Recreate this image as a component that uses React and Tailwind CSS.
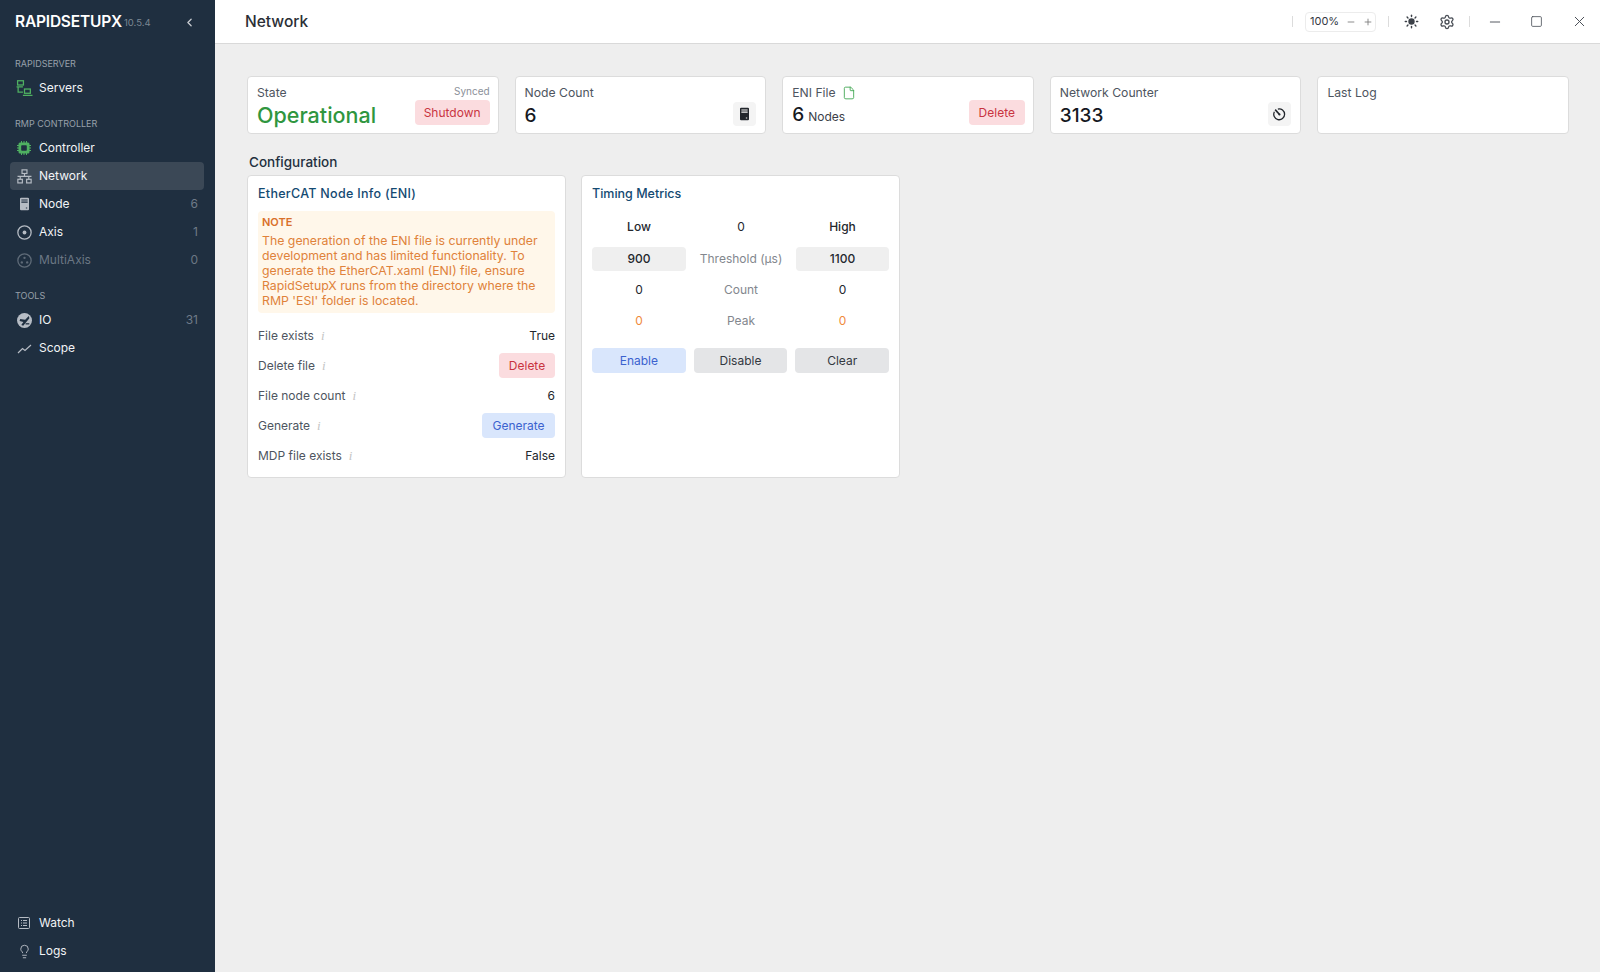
import { ChevronLeft, Minus, Plus, Sun, Settings, X, Square, File, Lightbulb } from 'lucide-react'

const FONT = "font-['Inter','Noto_Sans',sans-serif]"

function ServersIcon() {
  return (
    <svg width="17" height="17" viewBox="0 0 16 16" fill="none" stroke="currentColor" strokeWidth="1.2">
      <rect x="1.500" y="0.700" width="5.500" height="4" />
      <rect x="8" y="8.500" width="5.500" height="4" />
      <path d="M0.500 6.500h6M2 6.500v5h4.500M6.500 14.500h9" />
    </svg>
  )
}

function ChipIcon() {
  return (
    <svg width="14" height="14" viewBox="0 0 14 14" fill="currentColor">
      <path d="M3 1.500h8a1.500 1.500 0 0 1 1.500 1.500v8a1.500 1.500 0 0 1-1.500 1.500H3A1.500 1.500 0 0 1 1.500 11V3A1.500 1.500 0 0 1 3 1.500z" />
      <path d="M4 0h1v14H4zM6.500 0h1v14h-1zM9 0h1v14H9zM0 4h14v1H0zM0 6.500h14v1H0zM0 9h14v1H0z" />
      <rect x="4.200" y="4.200" width="5.600" height="5.600" rx="0.800" fill="#1f2f40" />
    </svg>
  )
}

function NetworkIcon() {
  return (
    <svg width="15" height="15" viewBox="0 0 14 14" fill="none" stroke="currentColor" strokeWidth="1.100">
      <rect x="4.700" y="0.800" width="4.600" height="3.400" />
      <rect x="0.800" y="9.600" width="4.200" height="3.400" />
      <rect x="9" y="9.600" width="4.200" height="3.400" />
      <path d="M7 4.200v2.600M0.500 6.800h13M3 6.800v2.800M11 6.800v2.800" />
    </svg>
  )
}

function NodeIcon({ className = '' }) {
  return (
    <svg width="9" height="14" viewBox="0 0 10 14" className={className}>
      <path fill="currentColor" fillRule="evenodd" d="M1.200 0h7.600A1.200 1.200 0 0 1 10 1.200v11.600A1.200 1.200 0 0 1 8.800 14H1.200A1.200 1.200 0 0 1 0 12.800V1.200A1.200 1.200 0 0 1 1.200 0zM1.500 2v1.200h7V2zm0 2.300v1.200h7V4.300zM6.500 11v1h1.500v-1z" />
    </svg>
  )
}

function AxisIcon() {
  return (
    <svg width="15" height="15" viewBox="0 0 14 14" fill="none">
      <circle cx="7" cy="7" r="6.200" stroke="currentColor" strokeWidth="1.200" />
      <circle cx="7" cy="7" r="1.800" fill="currentColor" />
    </svg>
  )
}

function MultiAxisIcon() {
  return (
    <svg width="15" height="15" viewBox="0 0 14 14" fill="none">
      <circle cx="7" cy="7" r="6.200" stroke="currentColor" strokeWidth="1.200" />
      <circle cx="7" cy="4.500" r="1.100" fill="currentColor" />
      <circle cx="4.500" cy="8.800" r="1.100" fill="currentColor" />
      <circle cx="9.500" cy="8.800" r="1.100" fill="currentColor" />
    </svg>
  )
}

function IoIcon() {
  return (
    <svg width="15" height="15" viewBox="0 0 14 14">
      <circle cx="7" cy="7" r="7" fill="currentColor" />
      <path d="M11 2.800 7.600 6.400 3 5.600 2.400 7.400 6 8.400 4 11.200 5.800 12 11.600 5z" fill="#1f2f40" />
      <path d="M8 9.500h3.500v1.200H8z" fill="#1f2f40" />
    </svg>
  )
}

function ScopeIcon() {
  return (
    <svg width="15" height="15" viewBox="0 0 15 15" fill="none" stroke="currentColor" strokeWidth="1.200">
      <path d="M1 12 5.500 7.500 8 9.500 14 4" />
    </svg>
  )
}

function WatchIcon() {
  return (
    <svg width="12" height="12" viewBox="0 0 12 12" fill="none" stroke="currentColor" strokeWidth="1">
      <rect x="0.500" y="0.500" width="11" height="11" rx="1" />
      <path d="M3 3.500h1M5 3.500h4M3 6h1M5 6h4M3 8.500h1M5 8.500h4" />
    </svg>
  )
}

function CounterIcon() {
  return (
    <svg width="13" height="13" viewBox="0 0 12 12" fill="none" stroke="currentColor" strokeWidth="1.200">
      <path d="M4.500 1a5 5 0 1 1-3.200 2.500" />
      <path d="M2 1.500 6 6" strokeWidth="1.500" />
      <circle cx="6" cy="6" r="1" fill="currentColor" stroke="none" />
    </svg>
  )
}

function NavItem({ icon, label, count, iconColor = 'text-[#b6bcc4]', active, muted }) {
  return (
    <div className={`flex h-7 items-center rounded pl-[5px] pr-[6px] ${active ? 'bg-[#3b4856]' : ''}`}>
      <span className={`flex w-[18px] justify-center ${iconColor}`}>{icon}</span>
      <span className={`ml-[6px] flex-1 text-[12px] ${muted ? 'text-[#6b7784]' : 'text-[#f2f4f6]'}`}>{label}</span>
      {count !== undefined && <span className={`text-xs ${muted ? 'text-[#6b7784]' : 'text-[#6f7b88]'}`}>{count}</span>}
    </div>
  )
}

function SectionLabel({ children }) {
  return <div className="mb-[4px] pl-[5px] text-[9px] leading-[12px] text-[#97a0aa]">{children}</div>
}

function Sidebar() {
  return (
    <aside className="flex w-[215px] shrink-0 flex-col bg-[#1f2f40] pl-[10px] pr-[11px]">
      <div className="flex h-[43px] items-center pt-[1px] pl-[5px] pr-[1px]">
        <span className="text-[15.500px] font-semibold tracking-[-0.2px] text-white">RAPIDSETUPX</span>
        <span className="ml-[2px] mt-[2px] text-[9.500px] text-[#7c8793]">10.5.4</span>
        <ChevronLeft size={13} strokeWidth={2.400} className="ml-auto mr-[7px] text-[#c8ccd1]" />
      </div>
      <div className="mt-[15px]"><SectionLabel>RAPIDSERVER</SectionLabel></div>
      <NavItem icon={<ServersIcon />} iconColor="text-[#4fb061]" label="Servers" />
      <div className="mt-[16px]"><SectionLabel>RMP CONTROLLER</SectionLabel></div>
      <NavItem icon={<ChipIcon />} iconColor="text-[#4fb061]" label="Controller" />
      <NavItem icon={<NetworkIcon />} label="Network" active />
      <NavItem icon={<NodeIcon />} label="Node" count="6" />
      <NavItem icon={<AxisIcon />} label="Axis" count="1" />
      <NavItem icon={<MultiAxisIcon />} iconColor="text-[#5f6b78]" label="MultiAxis" count="0" muted />
      <div className="mt-[16px]"><SectionLabel>TOOLS</SectionLabel></div>
      <NavItem icon={<IoIcon />} label="IO" count="31" />
      <NavItem icon={<ScopeIcon />} label="Scope" />
      <div className="mt-auto mb-[7px]">
        <NavItem icon={<WatchIcon />} label="Watch" />
        <NavItem icon={<Lightbulb size={15} strokeWidth={1.500} />} label="Logs" />
      </div>
    </aside>
  )
}

function TitleBar() {
  return (
    <header className="flex h-[44px] shrink-0 items-center border-b border-[#d9d9d9] bg-white pl-[30px]">
      <h1 className="pt-[1px] text-[15.500px] font-medium text-[#2b2f36]">Network</h1>
      <div className="ml-auto flex items-center text-[#4a4f57]">
        <span className="h-[11px] w-px bg-[#dcdcdc]" />
        <div className="ml-[12px] flex h-[20px] w-[71px] items-center rounded-sm border border-[#ececec] pl-[4px] text-[11px] text-[#33383f]">
          100%
          <Minus size={10} strokeWidth={2} className="ml-[7px] text-[#777]" />
          <Plus size={10} strokeWidth={2} className="ml-[7px] text-[#777]" />
        </div>
        <span className="ml-[12px] h-[11px] w-px bg-[#dcdcdc]" />
        <Sun size={15} strokeWidth={2.200} className="ml-[15px] fill-[#3c4148] text-[#3c4148]" />
        <Settings size={16} strokeWidth={2} className="ml-[20px]" />
        <span className="ml-[14px] h-[11px] w-px bg-[#dcdcdc]" />
        <Minus size={16} strokeWidth={1.400} className="ml-[17px]" />
        <Square size={13} strokeWidth={1.500} className="ml-[27px]" />
        <X size={17} strokeWidth={1.400} className="ml-[28px] mr-[12px]" />
      </div>
    </header>
  )
}

function StatCard({ label, children }) {
  return (
    <div className="relative h-[58px] flex-1 rounded border border-[#dcdcdc] bg-white px-[9px] pt-[7px]">
      <div className="flex items-center text-[12.200px] leading-[17px] text-[#4e5560]">{label}</div>
      {children}
    </div>
  )
}

function IconTile({ children }) {
  return (
    <div className="absolute right-[9px] top-[25px] flex h-6 w-[23px] items-center justify-center rounded bg-[#f4f4f4] text-[#22262c]">
      {children}
    </div>
  )
}

function Pill({ tone = 'red', className = '', children }) {
  const tones = {
    red: 'bg-[#fbdcdf] text-[#c9343f]',
    blue: 'bg-[#d9e6fc] text-[#3b62cf]',
  }
  return (
    <button className={`flex h-[25px] items-center justify-center rounded text-[12px] ${tones[tone]} ${className}`}>
      {children}
    </button>
  )
}

function StatRow() {
  return (
    <div className="flex gap-4">
      <StatCard label="State">
        <div className="mt-[2px] text-[21.500px] font-medium leading-[24px] text-[#2f963f]">Operational</div>
        <span className="absolute right-[8px] top-[7px] text-[10px] leading-[14px] text-[#8b9099]">Synced</span>
        <Pill className="absolute right-[8px] top-[23px] w-[75px]">Shutdown</Pill>
      </StatCard>
      <StatCard label="Node Count">
        <div className="mt-[3px] text-[19px] font-medium leading-[24px] text-[#15191f]">6</div>
        <IconTile><NodeIcon /></IconTile>
      </StatCard>
      <StatCard label={<>ENI File <File size={14} strokeWidth={1.500} className="ml-[6px] text-[#3fa650]" /></>}>
        <div className="mt-[2px] flex items-baseline text-[19px] font-medium leading-[24px] text-[#15191f]">
          6<span className="ml-[4px] text-[12px] font-normal text-[#3c4149]">Nodes</span>
        </div>
        <Pill className="absolute right-[8px] top-[23px] w-[56px]">Delete</Pill>
      </StatCard>
      <StatCard label="Network Counter">
        <div className="mt-[3px] text-[19px] font-medium leading-[24px] text-[#15191f]">3133</div>
        <IconTile><CounterIcon /></IconTile>
      </StatCard>
      <StatCard label="Last Log" />
    </div>
  )
}

function InfoRow({ label, height = 'h-[31px]', children }) {
  return (
    <div className={`flex items-center justify-between ${height}`}>
      <span className="text-[12px] text-[#4e5560]">
        {label}
        <i className="ml-[7px] font-['Liberation_Serif',serif] text-[13px] text-[#c4c4c4]">i</i>
      </span>
      <span className="text-[12px] text-[#23272d]">{children}</span>
    </div>
  )
}

function EniCard() {
  return (
    <section className="h-[303px] w-[319px] rounded border border-[#dcdcdc] bg-white px-[10px] pt-[10px]">
      <h3 className="text-[12.500px] font-medium leading-[16px] tracking-[0.3px] text-[#144a72]">EtherCAT Node Info (ENI)</h3>
      <div className="mt-[9px] h-[102px] rounded bg-[#fff7ea] px-1 pt-[5px] text-[12.300px] leading-[15px] text-[#e0823a]">
        <div className="text-[11px] font-semibold leading-[13px] text-[#d9702a]">NOTE</div>
        <p className="mt-[4px] whitespace-nowrap">
          The generation of the ENI file is currently under<br />
          development and has limited functionality. To<br />
          generate the EtherCAT.xaml (ENI) file, ensure<br />
          RapidSetupX runs from the directory where the<br />
          RMP 'ESI' folder is located.
        </p>
      </div>
      <div className="mt-[10px]">
        <InfoRow label="File exists" height="h-[26px]">True</InfoRow>
        <InfoRow label="Delete file" height="h-[33px]">
          <Pill className="w-[56px]">Delete</Pill>
        </InfoRow>
        <InfoRow label="File node count" height="h-[27px]">6</InfoRow>
        <InfoRow label="Generate" height="h-[33px]">
          <Pill tone="blue" className="w-[73px]">Generate</Pill>
        </InfoRow>
        <InfoRow label="MDP file exists" height="h-[27px]">False</InfoRow>
      </div>
    </section>
  )
}

function MetricRow({ left, mid, right, valueClass, height = 'h-[31px]', boxed }) {
  const box = boxed ? 'h-6 rounded-sm bg-[#efefef] font-medium' : ''
  return (
    <div className={`grid grid-cols-[94px_1fr_93px] items-center text-center text-[12px] ${height}`}>
      <div className={`flex items-center justify-center ${box} ${valueClass}`}>{left}</div>
      <div className="text-[#83878e]">{mid}</div>
      <div className={`flex items-center justify-center ${box} ${valueClass}`}>{right}</div>
    </div>
  )
}

function TimingCard() {
  return (
    <section className="h-[303px] w-[319px] rounded border border-[#dcdcdc] bg-white px-[10px] pt-[10px]">
      <h3 className="text-[12.500px] font-medium leading-[16px] text-[#144a72]">Timing Metrics</h3>
      <div className="mt-[12px]">
        <div className="grid h-[25px] grid-cols-[94px_1fr_93px] items-center text-center text-[12px] font-medium text-[#23272d]">
          <span>Low</span><span className="font-normal">0</span><span>High</span>
        </div>
        <div className="mt-[4px]">
          <MetricRow left="900" mid="Threshold (µs)" right="1100" valueClass="text-[#23272d]" boxed />
        </div>
        <MetricRow left="0" mid="Count" right="0" valueClass="text-[#23272d]" />
        <MetricRow left="0" mid="Peak" right="0" valueClass="text-[#f08a3c]" />
      </div>
      <div className="mt-[12px] grid grid-cols-3 gap-2">
        <button className="h-[25px] rounded bg-[#d9e6fc] text-[12px] text-[#3b62cf]">Enable</button>
        <button className="h-[25px] rounded bg-[#e4e5e7] text-[12px] text-[#33383f]">Disable</button>
        <button className="h-[25px] rounded bg-[#e4e5e7] text-[12px] text-[#33383f]">Clear</button>
      </div>
    </section>
  )
}

export default function App() {
  return (
    <div className={`flex h-[972px] w-[1600px] overflow-hidden ${FONT}`}>
      <Sidebar />
      <div className="flex min-w-0 flex-1 flex-col bg-[#eeeeee]">
        <TitleBar />
        <main className="pl-[32px] pr-[31px] pt-[32px]">
          <StatRow />
          <h2 className="mt-[19px] pl-[2px] text-[13.500px] font-medium leading-[18px] text-[#23303e]">Configuration</h2>
          <div className="mt-[4px] flex gap-[15px]">
            <EniCard />
            <TimingCard />
          </div>
        </main>
      </div>
    </div>
  )
}
